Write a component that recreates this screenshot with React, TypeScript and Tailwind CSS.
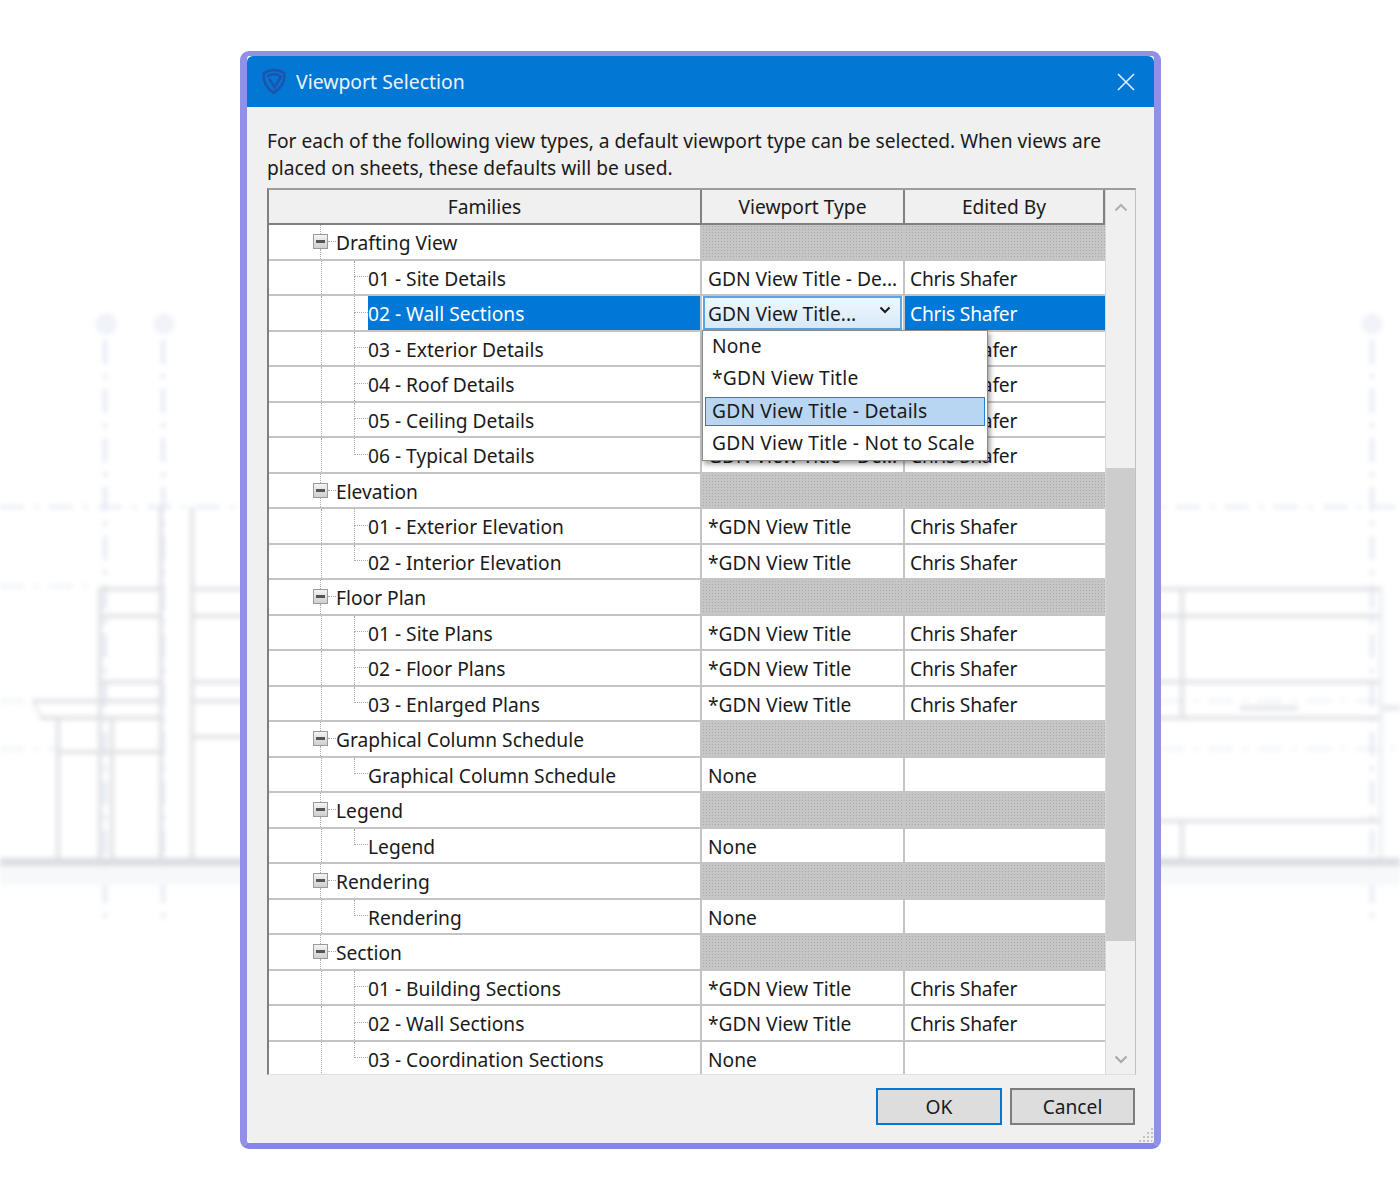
const font = "font-['Noto_Sans','Open_Sans',sans-serif]";

type Row = {
  kind: "group" | "child";
  name: string;
  type?: string;
  by?: string;
  last?: boolean;
  selected?: boolean;
};

const T = "*GDN View Title";
const D = "GDN View Title - De...";
const C = "Chris Shafer";

const rows: Row[] = [
  { kind: "group", name: "Drafting View" },
  { kind: "child", name: "01 - Site Details", type: D, by: C },
  { kind: "child", name: "02 - Wall Sections", type: "GDN View Title...", by: C, selected: true },
  { kind: "child", name: "03 - Exterior Details", type: D, by: C },
  { kind: "child", name: "04 - Roof Details", type: D, by: C },
  { kind: "child", name: "05 - Ceiling Details", type: D, by: C },
  { kind: "child", name: "06 - Typical Details", type: D, by: C, last: true },
  { kind: "group", name: "Elevation" },
  { kind: "child", name: "01 - Exterior Elevation", type: T, by: C },
  { kind: "child", name: "02 - Interior Elevation", type: T, by: C, last: true },
  { kind: "group", name: "Floor Plan" },
  { kind: "child", name: "01 - Site Plans", type: T, by: C },
  { kind: "child", name: "02 - Floor Plans", type: T, by: C },
  { kind: "child", name: "03 - Enlarged Plans", type: T, by: C, last: true },
  { kind: "group", name: "Graphical Column Schedule" },
  { kind: "child", name: "Graphical Column Schedule", type: "None", last: true },
  { kind: "group", name: "Legend" },
  { kind: "child", name: "Legend", type: "None", last: true },
  { kind: "group", name: "Rendering" },
  { kind: "child", name: "Rendering", type: "None", last: true },
  { kind: "group", name: "Section" },
  { kind: "child", name: "01 - Building Sections", type: T, by: C },
  { kind: "child", name: "02 - Wall Sections", type: T, by: C },
  { kind: "child", name: "03 - Coordination Sections", type: "None", last: true },
];

const hatch =
  "bg-[#c6c6c6] bg-[radial-gradient(#a8a8a8_1px,transparent_1px)] bg-[length:3px_3px]";

const Backdrop = () => (
  <svg
    className="absolute inset-0 blur-[2.5px]"
    width="1400"
    height="1200"
    viewBox="0 0 1400 1200"
    fill="none"
  >
    <g stroke="#e4e9f3" strokeWidth="3" strokeDasharray="24 10 5 10">
      <path d="M0 507H1400" />
      <path d="M0 586H100" strokeWidth="2" />
      <path d="M0 701H33M1160 701H1382" strokeWidth="2" />
      <path d="M0 749H57M1160 749H1400" strokeWidth="2" />
      <path d="M105 340V920M163 340V920M1372 340V920" strokeWidth="4" />
    </g>
    <g stroke="#e6ebf4" strokeWidth="2" fill="#f1f4f9">
      <circle cx="106" cy="324" r="9" />
      <circle cx="164" cy="324" r="9" />
      <circle cx="1372" cy="324" r="9" />
    </g>
    <g stroke="#e0e1e5" strokeWidth="4">
      <path d="M100 589H161M192 589H245M100 616H161M192 616H245M100 682H161M192 682H245" />
      <path d="M33 701H161M192 701H245M192 737H245M40 718H161M57 752H161" />
      <path d="M1155 589H1382M1155 616H1382M1155 682H1382M1155 718H1382M1155 821H1382" />
      <path d="M1240 708H1298M1382 708H1400" />
      <path d="M161 507V862M192 507V862M100 589V862M58 718V862M112 718V862" />
      <path d="M1182 589V718M1182 821V862" />
      <path d="M1381 589V862" stroke="#eeeff2" />
      <path d="M33 701L42 718" strokeWidth="2" />
    </g>
    <path d="M0 862H1400" stroke="#dadce1" strokeWidth="8" />
    <path d="M0 876H1400" stroke="#f7f8fa" strokeWidth="18" />
  </svg>
);

const Logo = () => (
  <svg width="26" height="26" viewBox="2 1 23 24" fill="none" stroke="#1c55ad" className="blur-[0.4px]">
    <path d="M4 6C9 2 18 2 23 6C24 13 20 20 13 24C7 20 3 13 4 6Z" strokeWidth="2.5" />
    <path d="M7 9C11 6 16 6 20 9L14 19L9 11" strokeWidth="2.5" />
  </svg>
);

const Minus = () => (
  <div className="w-[15px] h-[15px] shrink-0 border border-[#9a9a9a] bg-gradient-to-b from-[#f4f4f4] to-[#cfcfcf] flex items-center justify-center">
    <div className="w-[9px] h-[3px] bg-[#555555]" />
  </div>
);

const dot = "border-[#a9a9a9] border-dotted";

const TreeCell = ({ row }: { row: Row }) => {
  if (row.kind === "group") {
    return (
      <div className="w-[431px] h-full flex items-center bg-white">
        <div className="w-[44px] shrink-0" />
        <div className="h-full w-[15px] shrink-0 flex flex-col items-center">
          <div className={`flex-1 border-l ${dot}`} />
          <Minus />
          <div className={`flex-1 border-l ${dot}`} />
        </div>
        <div className={`w-[8px] shrink-0 border-t ${dot}`} />
        <span className="pt-[4px] text-[#1a1a1a]">{row.name}</span>
      </div>
    );
  }
  return (
    <div className="w-[431px] h-full flex items-center bg-white">
      <div className="w-[52px] shrink-0" />
      <div className={`w-[33px] h-full shrink-0 border-l ${dot}`} />
      <div className="w-[14px] h-full shrink-0 flex flex-col">
        <div className={`h-1/2 border-l border-b ${dot}`} />
        <div className={`h-1/2 ${row.last ? "" : `border-l ${dot}`}`} />
      </div>
      <span
        className={
          row.selected
            ? "flex-1 h-full pt-[4px] flex items-center bg-[#0078d7] text-white"
            : "pt-[4px] text-[#1a1a1a]"
        }
      >
        {row.name}
      </span>
    </div>
  );
};

const TableRow = ({ row }: { row: Row }) => (
  <div className="h-[35.5px] shrink-0 flex border-b-2 border-[#c4c4c4] box-border">
    <TreeCell row={row} />
    <div className="w-[203px] h-full shrink-0 border-l-2 border-[#c4c4c4] bg-white">
      {row.kind === "group" ? (
        <div className={`h-full ${hatch}`} />
      ) : row.selected ? (
        <div className="h-full mx-px pt-[4px] flex items-center justify-between pl-[3px] pr-[9px] border-2 border-[#5aa5e6] bg-gradient-to-b from-[#eef6fd] to-[#d9e9f8] text-[#1a1a1a]">
          <span>{row.type}</span>
          <svg width="12" height="8" viewBox="0 0 12 8" fill="none" stroke="#1a1a1a" strokeWidth="2" className="mb-[10px]">
            <path d="M1.5 1.5L6 6L10.5 1.5" />
          </svg>
        </div>
      ) : (
        <div className="h-full pt-[4px] flex items-center pl-[6px] text-[#1a1a1a] whitespace-nowrap overflow-hidden">
          {row.type}
        </div>
      )}
    </div>
    <div className="w-[202px] h-full shrink-0 border-l-2 border-[#c4c4c4]">
      {row.kind === "group" ? (
        <div className={`h-full ${hatch}`} />
      ) : (
        <div
          className={`h-full pt-[4px] flex items-center pl-[5px] tracking-[-0.2px] ${
            row.selected ? "bg-[#0078d7] text-white" : "bg-white text-[#1a1a1a]"
          }`}
        >
          {row.by}
        </div>
      )}
    </div>
  </div>
);

const Scrollbar = () => (
  <div className="w-[31px] shrink-0 flex flex-col items-center bg-[#f0f0f0] border-l border-[#d8d8d8]">
    <svg width="14" height="9" viewBox="0 0 14 9" fill="none" stroke="#b0b0b0" strokeWidth="2" className="mt-[13px] shrink-0">
      <path d="M1.5 7.5L7 2L12.5 7.5" />
    </svg>
    <div className="h-[256px] shrink-0" />
    <div className="w-full h-[473px] shrink-0 bg-[#cdcdcd]" />
    <div className="flex-1" />
    <svg width="14" height="9" viewBox="0 0 14 9" fill="none" stroke="#a8a8a8" strokeWidth="2" className="mb-[10px] shrink-0">
      <path d="M1.5 1.5L7 7L12.5 1.5" />
    </svg>
  </div>
);

const Dropdown = () => (
  <div className="absolute left-[455px] top-[223px] w-[286px] h-[131px] bg-white border border-[#8a8a8a] shadow-[2px_3px_5px_rgba(0,0,0,0.4)] flex flex-col p-[2px] text-[#1a1a1a] tracking-[0.2px]">
    <div className="h-[31px] pb-[4px] flex items-center pl-[7px]">None</div>
    <div className="h-[33px] pb-[4px] flex items-center pl-[7px]">*GDN View Title</div>
    <div className="h-[29px] flex items-center pl-[6px] bg-[#b8d6f1] border border-[#1f80d6]">
      GDN View Title - Details
    </div>
    <div className="h-[33px] pt-[2px] flex items-center pl-[7px]">GDN View Title - Not to Scale</div>
  </div>
);

const Grip = () => (
  <div className="absolute right-[1px] bottom-[1px] grid grid-cols-4 gap-[2px]">
    {[0, 0, 0, 1, 0, 0, 1, 1, 0, 1, 1, 1, 1, 1, 1, 1].map((on, i) => (
      <div key={i} className={on ? "w-[2px] h-[2px] bg-[#c2c2c2]" : "w-[2px] h-[2px]"} />
    ))}
  </div>
);

const App = () => {
  return (
    <div className={`relative w-[1400px] h-[1200px] overflow-hidden bg-white ${font}`}>
      <Backdrop />
      <div className="relative ml-[240px] mr-[239px] w-[921px] h-[1098px] top-[51px] rounded-[9px] border-x-[7px] border-t-[5px] border-b-[6px] border-x-[#9090e8] border-t-[#9090e8] border-b-[#8686e2]">
        <div className="relative h-full rounded-[6px] overflow-hidden bg-[#f0f0f0] flex flex-col text-[19.2px]">
          <div className="h-[51px] shrink-0 flex items-center justify-between bg-[#0277d4] pl-[14px] pr-[19px] text-white">
            <div className="flex items-center gap-[9px]">
              <Logo />
              <span className="text-[19.4px] text-[#eaf3fb]">Viewport Selection</span>
            </div>
            <svg width="18" height="18" viewBox="0 0 18 18" fill="none" stroke="#eaf3fb" strokeWidth="1.5">
              <path d="M1 1L17 17M17 1L1 17" />
            </svg>
          </div>
          <div className="relative flex-1 flex flex-col px-[20px]">
            <p className="mt-[20px] h-[61px] leading-[27px] text-[#1a1a1a] whitespace-nowrap">
              For each of the following view types, a default viewport type can be selected. When views are
              <br />
              placed on sheets, these defaults will be used.
            </p>
            <div className="relative w-[869px] h-[887px] shrink-0 flex border-t-2 border-l-2 border-r border-t-[#9c9c9c] border-l-[#808080] border-r-[#c0c0c0] border-b border-b-[#e0e0e0] overflow-hidden bg-white">
              <div className="w-[836px] shrink-0 flex flex-col">
                <div className="h-[35px] shrink-0 flex border-b-2 border-[#808080] bg-[#f0f0f0] text-[#1a1a1a]">
                  <div className="w-[431px] pt-[2px] flex items-center justify-center">Families</div>
                  <div className="w-[203px] pt-[2px] flex items-center justify-center border-l-2 border-[#808080]">
                    Viewport Type
                  </div>
                  <div className="w-[202px] pt-[2px] flex items-center justify-center border-x-2 border-[#808080]">
                    Edited By
                  </div>
                </div>
                {rows.map((row, i) => (
                  <TableRow key={i} row={row} />
                ))}
              </div>
              <Scrollbar />
            </div>
            <div className="flex justify-end gap-[8px] mt-[13px] mr-[-1px]">
              <button className="w-[126px] h-[37px] pt-[2px] border-2 border-[#0078d7] bg-[#dddddd] text-[#1a1a1a]">OK</button>
              <button className="w-[125px] h-[37px] pt-[2px] border-2 border-[#7d7d7d] bg-[#dddddd] text-[#1a1a1a]">Cancel</button>
            </div>
            <Dropdown />
          </div>
          <Grip />
        </div>
      </div>
    </div>
  );
};

export default App;
